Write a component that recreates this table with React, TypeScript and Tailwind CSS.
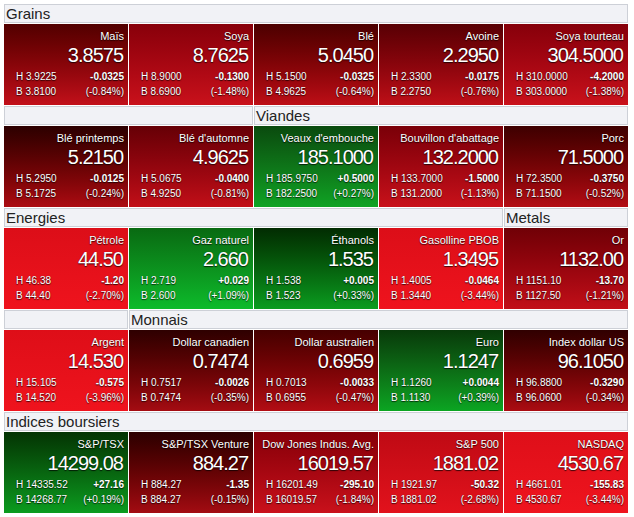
import React from "react";

type Tile = {
  name: string;
  value: string;
  h: string;
  b: string;
  chg: string;
  pct: string;
  grad: string;
};

type Header = { span: number; label: string };

const spanClass: Record<number, string> = {
  1: "col-span-1",
  2: "col-span-2",
  3: "col-span-3",
  4: "col-span-4",
  5: "col-span-5",
};

const sections: { headers: Header[]; tiles: Tile[] }[] = [
  {
    headers: [{ span: 5, label: "Grains" }],
    tiles: [
      { name: "Maïs", value: "3.8575", h: "3.9225", b: "3.8100", chg: "-0.0325", pct: "(-0.84%)", grad: "from-[#520000] to-[#c2101a]" },
      { name: "Soya", value: "8.7625", h: "8.9000", b: "8.6900", chg: "-0.1300", pct: "(-1.48%)", grad: "from-[#88000a] to-[#c9111b]" },
      { name: "Blé", value: "5.0450", h: "5.1500", b: "4.9625", chg: "-0.0325", pct: "(-0.64%)", grad: "from-[#4c0000] to-[#bd0e16]" },
      { name: "Avoine", value: "2.2950", h: "2.3300", b: "2.2750", chg: "-0.0175", pct: "(-0.76%)", grad: "from-[#580004] to-[#be0f17]" },
      { name: "Soya tourteau", value: "304.5000", h: "310.0000", b: "303.0000", chg: "-4.2000", pct: "(-1.38%)", grad: "from-[#86000a] to-[#c9111b]" },
    ],
  },
  {
    headers: [
      { span: 2, label: "" },
      { span: 3, label: "Viandes" },
    ],
    tiles: [
      { name: "Blé printemps", value: "5.2150", h: "5.2950", b: "5.1725", chg: "-0.0125", pct: "(-0.24%)", grad: "from-[#2c0000] to-[#ac0c12]" },
      { name: "Blé d'automne", value: "4.9625", h: "5.0675", b: "4.9250", chg: "-0.0400", pct: "(-0.81%)", grad: "from-[#660006] to-[#c20f18]" },
      { name: "Veaux d'embouche", value: "185.1000", h: "185.9750", b: "182.2500", chg: "+0.5000", pct: "(+0.27%)", grad: "from-[#0a4a0e] to-[#0fa324]" },
      { name: "Bouvillon d'abattage", value: "132.2000", h: "133.7000", b: "131.2000", chg: "-1.5000", pct: "(-1.13%)", grad: "from-[#7a0008] to-[#c8111a]" },
      { name: "Porc", value: "71.5000", h: "72.3500", b: "71.1500", chg: "-0.3750", pct: "(-0.52%)", grad: "from-[#3e0000] to-[#b30d14]" },
    ],
  },
  {
    headers: [
      { span: 4, label: "Energies" },
      { span: 1, label: "Metals" },
    ],
    tiles: [
      { name: "Pétrole", value: "44.50", h: "46.38", b: "44.40", chg: "-1.20", pct: "(-2.70%)", grad: "from-[#dc0e18] to-[#ef131d]" },
      { name: "Gaz naturel", value: "2.660", h: "2.719", b: "2.600", chg: "+0.029", pct: "(+1.09%)", grad: "from-[#096a12] to-[#0dbb2b]" },
      { name: "Éthanols", value: "1.535", h: "1.538", b: "1.523", chg: "+0.005", pct: "(+0.33%)", grad: "from-[#022c02] to-[#0b9c1f]" },
      { name: "Gasolline PBOB", value: "1.3495", h: "1.4005", b: "1.3440", chg: "-0.0464", pct: "(-3.44%)", grad: "from-[#dc0e18] to-[#ef131d]" },
      { name: "Or", value: "1132.00", h: "1151.10", b: "1127.50", chg: "-13.70", pct: "(-1.21%)", grad: "from-[#700006] to-[#c20f18]" },
    ],
  },
  {
    headers: [
      { span: 1, label: "" },
      { span: 4, label: "Monnais" },
    ],
    tiles: [
      { name: "Argent", value: "14.530", h: "15.105", b: "14.520", chg: "-0.575", pct: "(-3.96%)", grad: "from-[#de0e18] to-[#ef131d]" },
      { name: "Dollar canadien", value: "0.7474", h: "0.7517", b: "0.7474", chg: "-0.0026", pct: "(-0.35%)", grad: "from-[#2e0000] to-[#a40c12]" },
      { name: "Dollar australien", value: "0.6959", h: "0.7013", b: "0.6955", chg: "-0.0033", pct: "(-0.47%)", grad: "from-[#460000] to-[#b20d14]" },
      { name: "Euro", value: "1.1247", h: "1.1260", b: "1.1130", chg: "+0.0044", pct: "(+0.39%)", grad: "from-[#083a0a] to-[#0ba522]" },
      { name: "Index dollar US", value: "96.1050", h: "96.8800", b: "96.0600", chg: "-0.3290", pct: "(-0.34%)", grad: "from-[#300000] to-[#aa0c12]" },
    ],
  },
  {
    headers: [{ span: 5, label: "Indices boursiers" }],
    tiles: [
      { name: "S&P/TSX", value: "14299.08", h: "14335.52", b: "14268.77", chg: "+27.16", pct: "(+0.19%)", grad: "from-[#043404] to-[#0b9c1f]" },
      { name: "S&P/TSX Venture", value: "884.27", h: "884.27", b: "884.27", chg: "-1.35", pct: "(-0.15%)", grad: "from-[#2c0000] to-[#a30c12]" },
      { name: "Dow Jones Indus. Avg.", value: "16019.57", h: "16201.49", b: "16019.57", chg: "-295.10", pct: "(-1.84%)", grad: "from-[#860008] to-[#c9111b]" },
      { name: "S&P 500", value: "1881.02", h: "1921.97", b: "1881.02", chg: "-50.32", pct: "(-2.68%)", grad: "from-[#bf0a14] to-[#e2121c]" },
      { name: "NASDAQ", value: "4530.67", h: "4661.01", b: "4530.67", chg: "-155.83", pct: "(-3.44%)", grad: "from-[#de0f19] to-[#ef141e]" },
    ],
  },
];

const shadow = "[text-shadow:0_1px_1px_rgba(0,0,0,0.7),0_0_1px_rgba(0,0,0,0.4)]";

function TileView({ t }: { t: Tile }) {
  return (
    <div className={`h-[81px] bg-linear-to-b ${t.grad} text-white ${shadow}`}>
      <div className="pt-[6px] pr-[4px] text-right text-[11px] leading-[13px] whitespace-nowrap">
        {t.name}
      </div>
      <div className="pr-[5px] text-right text-[20px] leading-[24px] tracking-[-1px]">
        {t.value}
      </div>
      <div className="mt-[2px] flex justify-between pl-[12px] pr-[4px] text-[10px] leading-[15px]">
        <span>H {t.h}</span>
        <span className="font-bold">{t.chg}</span>
      </div>
      <div className="flex justify-between pl-[12px] pr-[4px] text-[10px] leading-[15px]">
        <span>B {t.b}</span>
        <span>{t.pct}</span>
      </div>
    </div>
  );
}

export default function App() {
  return (
    <div
      className="w-[634px] h-[517px] overflow-hidden bg-white pl-[4px] pt-[4px]"
      style={{ fontFamily: '"Liberation Sans", Arial, Helvetica, sans-serif' }}
    >
      <div className="grid grid-cols-[repeat(5,124px)] gap-px">
        {sections.map((s, si) => (
          <React.Fragment key={si}>
            {s.headers.map((h, hi) => (
              <div
                key={`h${hi}`}
                className={`${spanClass[h.span]} h-[19px] border border-[#cdd0d7] bg-[#f1f2f6] pl-px text-[15px] leading-[17px] text-[#222]`}
              >
                {h.label}
              </div>
            ))}
            {s.tiles.map((t, ti) => (
              <TileView key={`t${ti}`} t={t} />
            ))}
          </React.Fragment>
        ))}
      </div>
    </div>
  );
}
